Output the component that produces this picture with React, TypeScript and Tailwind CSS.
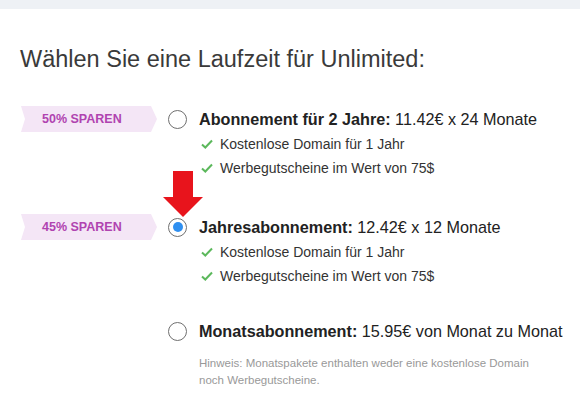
import React from "react";

interface OptionProps {
  badge?: string;
  label: string;
  price: string;
  checked?: boolean;
  children?: React.ReactNode;
  arrow?: boolean;
}

const Check = () => (
  <svg width="12" height="10" viewBox="0 0 12 10" className="shrink-0">
    <path d="M1 5.5 L4.3 8.5 L11 1.5" fill="none" stroke="#5cb85c" strokeWidth="2" />
  </svg>
);

const Badge: React.FC<{ text: string }> = ({ text }) => (
  <div className="relative w-[136px] h-[26px]">
    <svg width="136" height="26" viewBox="0 0 136 26" className="absolute inset-0">
      <polygon points="0,0 130,0 136,13 130,26 0,26 4,13" fill="#f4e6f6" />
    </svg>
    <span className="relative flex h-full items-center pl-[21px] text-[12.5px] font-bold text-[#b043b0]">
      {text}
    </span>
  </div>
);

const Radio: React.FC<{ checked?: boolean }> = ({ checked }) => (
  <div className="w-[19px] h-[19px] shrink-0 rounded-full border-[1.5px] border-[#6f6f6f] bg-white flex items-center justify-center">
    {checked && <div className="w-[10px] h-[10px] rounded-full bg-[#2f8ff0]" />}
  </div>
);

const Option: React.FC<OptionProps> = ({ badge, label, price, checked, children, arrow }) => (
  <div className="relative flex">
    <div className="w-[168px] shrink-0 pl-[21px]">{badge && <Badge text={badge} />}</div>
    <div className="flex flex-col">
      <div className="flex items-center h-[26px]">
        <Radio checked={checked} />
        <div className="ml-[12px] text-[16.2px] whitespace-nowrap text-[#222]">
          <span className="font-bold">{label}</span> {price}
        </div>
      </div>
      <div className="pl-[31px]">{children}</div>
    </div>
    {arrow && (
      <svg width="40" height="48" viewBox="0 0 40 48" className="absolute left-[163px] top-[-43px]">
        <rect x="10" y="0" width="20" height="28" fill="#e8141c" />
        <polygon points="0,26 40,26 20,46" fill="#e8141c" />
      </svg>
    )}
  </div>
);

const Feature: React.FC<{ text: string }> = ({ text }) => (
  <div className="flex items-center h-[24px] pl-[2px] text-[14px] text-[#333]">
    <Check />
    <span className="ml-[7px]">{text}</span>
  </div>
);

export default function App() {
  return (
    <div className="w-[580px] h-[419px] bg-white overflow-hidden font-['Liberation_Sans',Arial,sans-serif]">
      <div className="h-[9px] bg-[#eef1f5]" />
      <h1 className="mt-[37px] ml-[20px] text-[23.5px] leading-[26px] text-[#3a3a3a]">
        Wählen Sie eine Laufzeit für Unlimited:
      </h1>
      <div className="mt-[34px]">
        <Option badge="50% SPAREN" label="Abonnement für 2 Jahre:" price="11.42€ x 24 Monate">
          <Feature text="Kostenlose Domain für 1 Jahr" />
          <Feature text="Werbegutscheine im Wert von 75$" />
        </Option>
      </div>
      <div className="mt-[34px]">
        <Option badge="45% SPAREN" label="Jahresabonnement:" price="12.42€ x 12 Monate" checked arrow>
          <Feature text="Kostenlose Domain für 1 Jahr" />
          <Feature text="Werbegutscheine im Wert von 75$" />
        </Option>
      </div>
      <div className="mt-[30px]">
        <Option label="Monatsabonnement:" price="15.95€ von Monat zu Monat">
          <p className="mt-[11px] -ml-[31px] pl-[31px] text-[11.5px] leading-[17px] text-[#999] whitespace-nowrap">
            Hinweis: Monatspakete enthalten weder eine kostenlose Domain
            <br />
            noch Werbegutscheine.
          </p>
        </Option>
      </div>
    </div>
  );
}
